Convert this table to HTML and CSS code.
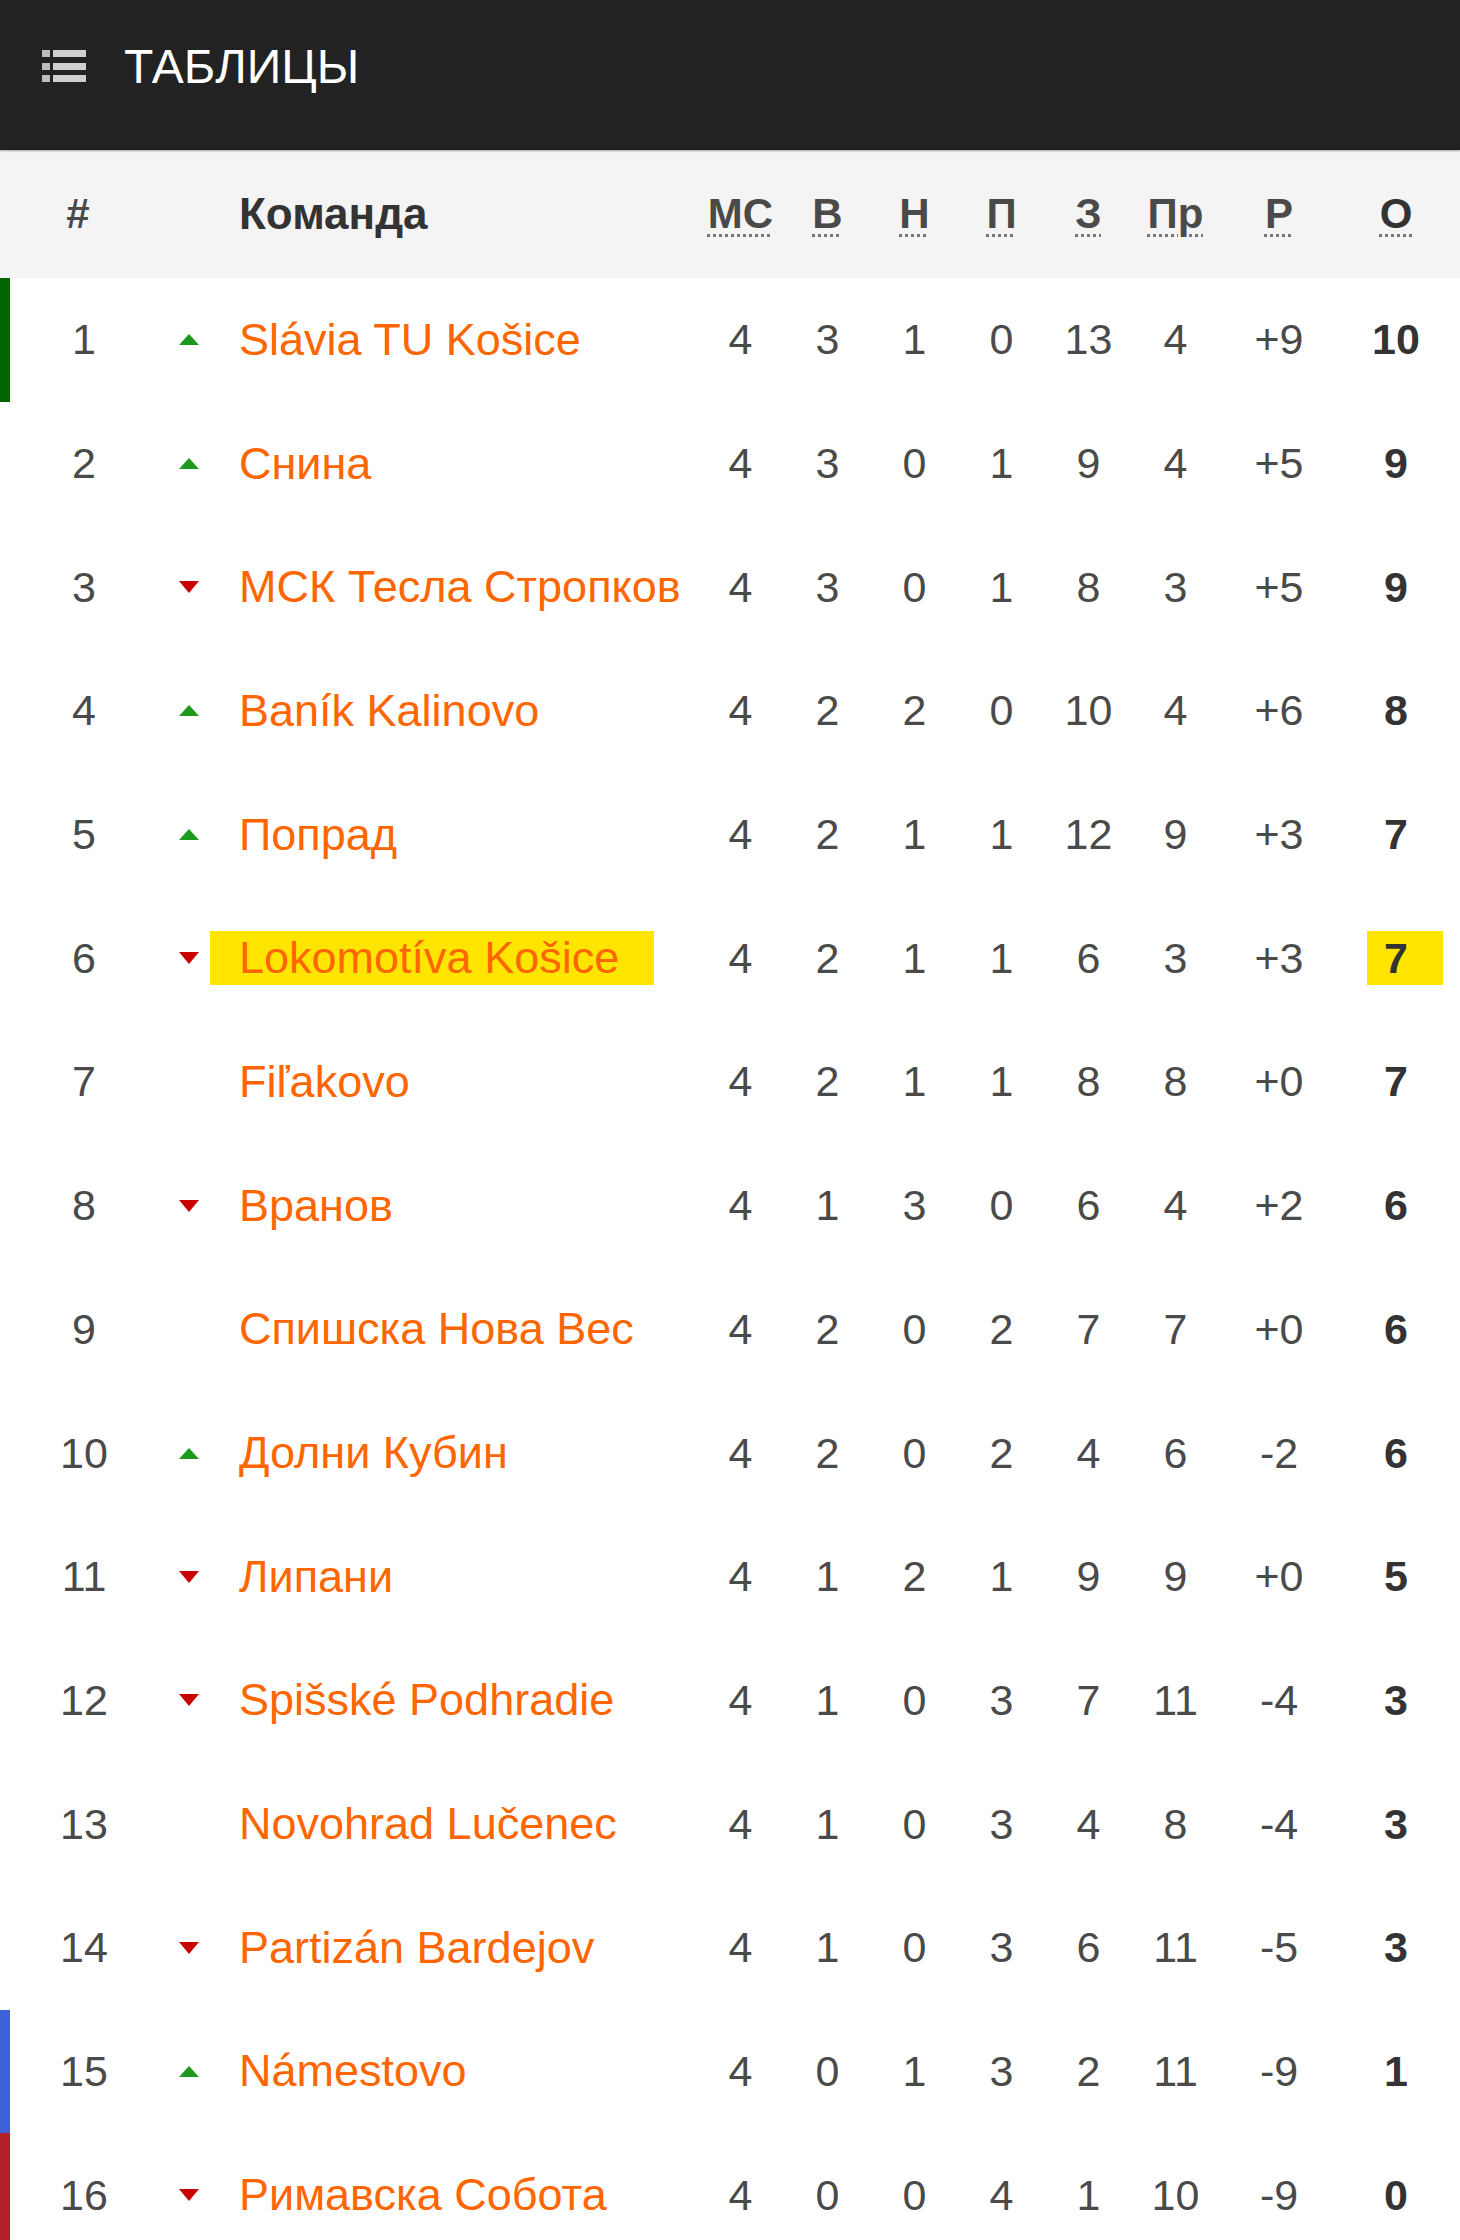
FILE: index.html
```html
<!DOCTYPE html>
<html lang="ru">
<head>
<meta charset="utf-8">
<title>Таблицы</title>
<link rel="stylesheet" href="styles.css">
</head>
<body>
<header class="topbar">
  <svg class="menu-icon" width="44" height="34" viewBox="0 0 44 34" aria-hidden="true">
    <rect x="0" y="1" width="8" height="7" fill="#bdbdbd"/>
    <rect x="11" y="1" width="33" height="7" fill="#cfcfcf"/>
    <rect x="0" y="14" width="8" height="7" fill="#bdbdbd"/>
    <rect x="11" y="14" width="33" height="7" fill="#cfcfcf"/>
    <rect x="0" y="26" width="8" height="7" fill="#bdbdbd"/>
    <rect x="11" y="26" width="33" height="7" fill="#cfcfcf"/>
  </svg>
  <h1 class="title">ТАБЛИЦЫ</h1>
</header>

<div class="standings">
  <div class="row head">
    <div class="c-pos">#</div>
    <div class="c-trend"></div>
    <div class="c-team">Команда</div>
    <div class="c-num"><abbr>МС</abbr></div>
    <div class="c-num"><abbr>В</abbr></div>
    <div class="c-num"><abbr>Н</abbr></div>
    <div class="c-num"><abbr>П</abbr></div>
    <div class="c-num"><abbr>З</abbr></div>
    <div class="c-num"><abbr>Пр</abbr></div>
    <div class="c-diff"><abbr>Р</abbr></div>
    <div class="c-pts"><abbr>О</abbr></div>
  </div>

  <div class="row promo">
    <div class="c-pos">1</div><div class="c-trend"><span class="up"></span></div>
    <div class="c-team"><span class="name">Slávia TU Košice</span></div>
    <div class="c-num">4</div><div class="c-num">3</div><div class="c-num">1</div><div class="c-num">0</div><div class="c-num">13</div><div class="c-num">4</div>
    <div class="c-diff">+9</div><div class="c-pts"><span class="pts">10</span></div>
  </div>
  <div class="row">
    <div class="c-pos">2</div><div class="c-trend"><span class="up"></span></div>
    <div class="c-team"><span class="name">Снина</span></div>
    <div class="c-num">4</div><div class="c-num">3</div><div class="c-num">0</div><div class="c-num">1</div><div class="c-num">9</div><div class="c-num">4</div>
    <div class="c-diff">+5</div><div class="c-pts"><span class="pts">9</span></div>
  </div>
  <div class="row">
    <div class="c-pos">3</div><div class="c-trend"><span class="down"></span></div>
    <div class="c-team"><span class="name">МСК Тесла Стропков</span></div>
    <div class="c-num">4</div><div class="c-num">3</div><div class="c-num">0</div><div class="c-num">1</div><div class="c-num">8</div><div class="c-num">3</div>
    <div class="c-diff">+5</div><div class="c-pts"><span class="pts">9</span></div>
  </div>
  <div class="row">
    <div class="c-pos">4</div><div class="c-trend"><span class="up"></span></div>
    <div class="c-team"><span class="name">Baník Kalinovo</span></div>
    <div class="c-num">4</div><div class="c-num">2</div><div class="c-num">2</div><div class="c-num">0</div><div class="c-num">10</div><div class="c-num">4</div>
    <div class="c-diff">+6</div><div class="c-pts"><span class="pts">8</span></div>
  </div>
  <div class="row">
    <div class="c-pos">5</div><div class="c-trend"><span class="up"></span></div>
    <div class="c-team"><span class="name">Попрад</span></div>
    <div class="c-num">4</div><div class="c-num">2</div><div class="c-num">1</div><div class="c-num">1</div><div class="c-num">12</div><div class="c-num">9</div>
    <div class="c-diff">+3</div><div class="c-pts"><span class="pts">7</span></div>
  </div>
  <div class="row">
    <div class="c-pos">6</div><div class="c-trend"><span class="down"></span></div>
    <div class="c-team"><span class="name hl">Lokomotíva Košice</span></div>
    <div class="c-num">4</div><div class="c-num">2</div><div class="c-num">1</div><div class="c-num">1</div><div class="c-num">6</div><div class="c-num">3</div>
    <div class="c-diff">+3</div><div class="c-pts"><span class="pts hl-pts">7</span></div>
  </div>
  <div class="row">
    <div class="c-pos">7</div><div class="c-trend"></div>
    <div class="c-team"><span class="name">Fiľakovo</span></div>
    <div class="c-num">4</div><div class="c-num">2</div><div class="c-num">1</div><div class="c-num">1</div><div class="c-num">8</div><div class="c-num">8</div>
    <div class="c-diff">+0</div><div class="c-pts"><span class="pts">7</span></div>
  </div>
  <div class="row">
    <div class="c-pos">8</div><div class="c-trend"><span class="down"></span></div>
    <div class="c-team"><span class="name">Вранов</span></div>
    <div class="c-num">4</div><div class="c-num">1</div><div class="c-num">3</div><div class="c-num">0</div><div class="c-num">6</div><div class="c-num">4</div>
    <div class="c-diff">+2</div><div class="c-pts"><span class="pts">6</span></div>
  </div>
  <div class="row">
    <div class="c-pos">9</div><div class="c-trend"></div>
    <div class="c-team"><span class="name">Спишска Нова Вес</span></div>
    <div class="c-num">4</div><div class="c-num">2</div><div class="c-num">0</div><div class="c-num">2</div><div class="c-num">7</div><div class="c-num">7</div>
    <div class="c-diff">+0</div><div class="c-pts"><span class="pts">6</span></div>
  </div>
  <div class="row">
    <div class="c-pos">10</div><div class="c-trend"><span class="up"></span></div>
    <div class="c-team"><span class="name">Долни Кубин</span></div>
    <div class="c-num">4</div><div class="c-num">2</div><div class="c-num">0</div><div class="c-num">2</div><div class="c-num">4</div><div class="c-num">6</div>
    <div class="c-diff">-2</div><div class="c-pts"><span class="pts">6</span></div>
  </div>
  <div class="row">
    <div class="c-pos">11</div><div class="c-trend"><span class="down"></span></div>
    <div class="c-team"><span class="name">Липани</span></div>
    <div class="c-num">4</div><div class="c-num">1</div><div class="c-num">2</div><div class="c-num">1</div><div class="c-num">9</div><div class="c-num">9</div>
    <div class="c-diff">+0</div><div class="c-pts"><span class="pts">5</span></div>
  </div>
  <div class="row">
    <div class="c-pos">12</div><div class="c-trend"><span class="down"></span></div>
    <div class="c-team"><span class="name">Spišské Podhradie</span></div>
    <div class="c-num">4</div><div class="c-num">1</div><div class="c-num">0</div><div class="c-num">3</div><div class="c-num">7</div><div class="c-num">11</div>
    <div class="c-diff">-4</div><div class="c-pts"><span class="pts">3</span></div>
  </div>
  <div class="row">
    <div class="c-pos">13</div><div class="c-trend"></div>
    <div class="c-team"><span class="name">Novohrad Lučenec</span></div>
    <div class="c-num">4</div><div class="c-num">1</div><div class="c-num">0</div><div class="c-num">3</div><div class="c-num">4</div><div class="c-num">8</div>
    <div class="c-diff">-4</div><div class="c-pts"><span class="pts">3</span></div>
  </div>
  <div class="row">
    <div class="c-pos">14</div><div class="c-trend"><span class="down"></span></div>
    <div class="c-team"><span class="name">Partizán Bardejov</span></div>
    <div class="c-num">4</div><div class="c-num">1</div><div class="c-num">0</div><div class="c-num">3</div><div class="c-num">6</div><div class="c-num">11</div>
    <div class="c-diff">-5</div><div class="c-pts"><span class="pts">3</span></div>
  </div>
  <div class="row playoff">
    <div class="c-pos">15</div><div class="c-trend"><span class="up"></span></div>
    <div class="c-team"><span class="name">Námestovo</span></div>
    <div class="c-num">4</div><div class="c-num">0</div><div class="c-num">1</div><div class="c-num">3</div><div class="c-num">2</div><div class="c-num">11</div>
    <div class="c-diff">-9</div><div class="c-pts"><span class="pts">1</span></div>
  </div>
  <div class="row releg">
    <div class="c-pos">16</div><div class="c-trend"><span class="down"></span></div>
    <div class="c-team"><span class="name">Римавска Собота</span></div>
    <div class="c-num">4</div><div class="c-num">0</div><div class="c-num">0</div><div class="c-num">4</div><div class="c-num">1</div><div class="c-num">10</div>
    <div class="c-diff">-9</div><div class="c-pts"><span class="pts">0</span></div>
  </div>
</div>
</body>
</html>
```

FILE: styles.css
```css
html, body {
  margin: 0;
  padding: 0;
  background: #ffffff;
}

body {
  width: 1460px;
  font-family: "Liberation Sans", Arial, sans-serif;
  color: #444444;
}

.topbar {
  height: 150px;
  box-sizing: border-box;
  background: #222222;
  display: flex;
  align-items: center;
  padding: 0 0 18px 42px;
  box-shadow: 0 1px 2px rgba(0, 0, 0, 0.35);
  position: relative;
  z-index: 1;
}

.menu-icon {
  display: block;
  flex: none;
}

.title {
  margin: 0 0 0 38px;
  font-size: 48px;
  font-weight: normal;
  color: #ffffff;
  letter-spacing: 0;
}

.standings {
  width: 1460px;
}

.row {
  display: grid;
  grid-template-columns: 168px 42px 487px repeat(6, 87px) 120px 1fr;
  height: 123.7px;
  align-items: center;
  padding-right: 7px;
  font-size: 43px;
}

.row > div {
  text-align: center;
  white-space: nowrap;
}

.row.head {
  height: 128px;
  background: #f4f4f4;
  font-weight: bold;
  font-size: 42px;
  color: #333333;
}

.row.head .c-pos {
  padding-right: 12px;
}

.row.head .c-team {
  padding-left: 29px;
  font-size: 44px;
}

abbr {
  text-decoration: underline dotted #777777;
  text-decoration-thickness: 3px;
  text-underline-offset: 6px;
}

.row.promo {
  box-shadow: inset 10px 0 0 #006400;
}

.row.playoff {
  box-shadow: inset 10px 0 0 #3e62d8;
}

.row.releg {
  box-shadow: inset 10px 0 0 #b2202a;
}

.c-pos {
  color: #4a4a4a;
}

.c-trend {
  display: flex;
  justify-content: center;
  align-items: center;
}

.up {
  width: 0;
  height: 0;
  border-left: 10px solid transparent;
  border-right: 10px solid transparent;
  border-bottom: 11px solid #1c9a1c;
}

.down {
  width: 0;
  height: 0;
  border-left: 10px solid transparent;
  border-right: 10px solid transparent;
  border-top: 12px solid #c80000;
}

.row > .c-team {
  text-align: left;
  padding-left: 29px;
}

.name {
  color: #ff6600;
  font-size: 45px;
}

.name.hl {
  display: inline-block;
  background: #ffe500;
  line-height: 54px;
  padding: 0 35px 0 29px;
  margin-left: -29px;
}

.c-num,
.c-diff {
  color: #4a4a4a;
}

.pts {
  font-weight: bold;
  color: #333333;
}

.pts.hl-pts {
  display: inline-block;
  background: #ffe500;
  line-height: 54px;
  padding: 0 35px 0 17px;
  margin-left: 18px;
}
```
